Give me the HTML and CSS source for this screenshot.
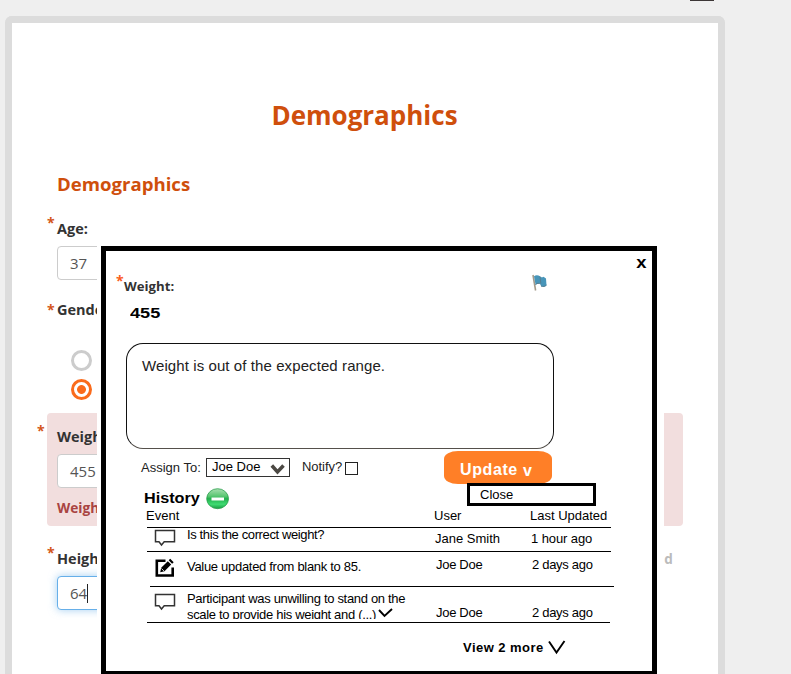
FILE: index.html
```html
<!DOCTYPE html>
<html lang="en">
<head>
<meta charset="utf-8">
<title>Demographics</title>
<link rel="stylesheet" href="styles.css">
</head>
<body>
<div class="top-mark"></div>
<main class="page">
  <h1>Demographics</h1>
  <h2>Demographics</h2>
  <section class="field age">
    <div class="label"><span class="req">*</span>Age:</div>
    <div class="input">37</div>
  </section>
  <section class="field gender">
    <div class="label"><span class="req">*</span>Gender:</div>
    <div class="radio"></div>
    <div class="radio checked"></div>
  </section>
  <section class="field weight">
    <div class="label"><span class="req">*</span>Weight:</div>
    <div class="input">455</div>
    <div class="error">Weight is out of the expected range.</div>
  </section>
  <section class="field height">
    <div class="label"><span class="req">*</span>Height:<span class="hint">d</span></div>
    <div class="input focus">64<i class="caret"></i></div>
  </section>
</main>

<div class="modal">
  <header class="modal-head">
    <div class="title"><span class="req">*</span>Weight:</div>
    <svg class="flag" width="16" height="18" viewBox="0 0 16 18"><path d="M1 1L3.6 16.5" stroke="#a39a8b" stroke-width="1.6"/><path d="M2 2.2C4 .8 6 1 8 2.2C8.500 3.500 10 3.500 11.500 2.700L14 4.500L14.500 11.500C12.500 13 10.500 13.200 9 12L8 9.500C6 9.500 5 9.700 3.600 11Z" fill="#4795b9"/><path d="M8 2.500L8.800 9.500M3.500 10.500C5 9 7 9 8.500 10M9 12C11 13 13 12.500 14.500 11" fill="none" stroke="#567e91" stroke-width="1"/></svg>
    <div class="close-x">x</div>
  </header>
  <div class="value"><span>455</span></div>
  <div class="message"><span>Weight is out of the expected range.</span></div>
  <div class="actions">
    <span class="assign">Assign To:</span>
    <div class="select"><span>Joe Doe</span><svg width="16" height="12" viewBox="0 0 16 12"><path d="M1.800 2.500L7.500 9L13.500 2.500" fill="none" stroke="#4c4944" stroke-width="3.500"/></svg></div>
    <span class="notify">Notify?</span>
    <div class="check"></div>
    <div class="update"><span class="update-text">Update</span><span class="update-v">v</span><div class="menu">Close</div></div>
  </div>
  <div class="history-head">
    <span class="history-title">History</span>
    <svg width="24" height="22" viewBox="0 0 24 22"><defs><linearGradient id="g" x1="0" y1="0" x2="0" y2="1"><stop offset="0" stop-color="#a9dfb0"/><stop offset=".38" stop-color="#58c671"/><stop offset=".5" stop-color="#22b04c"/><stop offset=".78" stop-color="#3fdb72"/><stop offset="1" stop-color="#189a42"/></linearGradient></defs><ellipse cx="11.600" cy="10.700" rx="10.900" ry="10" fill="url(#g)" stroke="#299f4b" stroke-width=".8"/><path d="M5.500 11H18" stroke="#fff" stroke-width="3"/></svg>
  </div>
  <div class="row columns"><span class="c1">Event</span><span class="c2">User</span><span class="c3">Last Updated</span></div>
  <div class="row first">
    <svg class="icon" width="24" height="20" viewBox="0 0 24 20"><path d="M1.500 1.500H20.500V12.800H10.200L7.500 16L5 12.800H1.500Z" fill="#fff" stroke="#333" stroke-width="1.500"/></svg>
    <span class="text">Is this the correct weight?</span><span class="user">Jane Smith</span><span class="date">1 hour ago</span>
  </div>
  <div class="row second">
    <svg class="icon" width="24" height="20" viewBox="0 0 24 20"><path d="M11.500 2.700H2.800V17.500H18.700V9.500" fill="none" stroke="#000" stroke-width="2.600"/><path d="M6.200 14.200L7.200 9.800L13.800 3.200L17.200 6.600L10.500 13.200ZM14.700 2.300L16.200 .8L19.700 4.200L18.100 5.700Z"/><path d="M7.500 10.500L10 13" stroke="#fff" stroke-width=".8"/></svg>
    <span class="text">Value updated from blank to 85.</span><span class="user">Joe Doe</span><span class="date">2 days ago</span>
  </div>
  <div class="row third">
    <svg class="icon" width="24" height="20" viewBox="0 0 24 20"><path d="M1.500 1.500H20.500V12.800H10.200L7.500 16L5 12.800H1.500Z" fill="#fff" stroke="#333" stroke-width="1.500"/></svg>
    <span class="text"><span class="line1">Participant was unwilling to stand on the</span><br><span class="line2">scale to provide his weight and (...)</span><svg class="chev" width="15" height="11" viewBox="0 0 15 11"><path d="M1 2L6.500 8L14 1" fill="none" stroke="#000" stroke-width="1.900"/></svg></span><span class="user">Joe Doe</span><span class="date">2 days ago</span>
  </div>
  <div class="more"><span>View 2 more</span><svg width="18" height="15" viewBox="0 0 18 15"><path d="M1 1.500L8.500 12.500L16.500 1" fill="none" stroke="#000" stroke-width="1.900"/></svg></div>
</div>
</body>
</html>
```
FILE: styles.css
```css
* { box-sizing: border-box; }
html, body { margin: 0; height: 674px; overflow: hidden; }
body { position: relative; background: #efefef; font-family: "Open Sans", sans-serif; }
svg { display: block; flex: none; }
.top-mark { width: 24px; height: 1px; margin-left: 690px; background: #3c3636; }
.page { width: 720px; height: 658px; margin: 15px 0 0 5px; border: 7px solid #dcdcdc; border-bottom: 0; border-radius: 7px 7px 0 0; background: #fff; padding: 74px 0 0 45px; }
h1, h2 { color: #cf4f0c; font-weight: 700; margin: 0; white-space: nowrap; }
h1 { width: 615px; text-align: center; font-size: 26px; line-height: 37px; height: 36px; }
h2 { font-size: 18.600px; line-height: 24px; margin-top: 39px; }
.label { position: relative; font-size: 14.500px; line-height: 20px; font-weight: 700; color: #333; white-space: nowrap; }
.req { position: absolute; left: -10px; top: -6px; font-size: 14px; font-weight: 700; color: #d4551a; }
.age { margin-top: 23px; height: 81px; }
.input { width: 560px; height: 34px; border: 1px solid #ccc; border-radius: 4px; background: #fff; padding-left: 12px; font-size: 15px; line-height: 33px; color: #555; display: flex; align-items: center; }
.age .input { margin-top: 7px; }
.gender { height: 113px; }
.gender .req { top: 0; }
.radio { width: 21px; height: 21px; border: 3px solid #ccc; border-radius: 50%; margin: 30px 0 0 14px; }
.radio.checked { margin-top: 8px; border-color: #fa6b1c; background: radial-gradient(circle, #fa6b1c 4px, #fff 4.800px); }
.weight { width: 636px; height: 113px; margin-left: -10px; padding: 14px 10px 0; background: #f2dede; border-radius: 4px; }
.weight .req { left: -20px; top: -6px; }
.weight .input { margin-top: 7px; }
.error { font-size: 13.700px; line-height: 20px; font-weight: 700; color: #a94442; margin-top: 10px; }
.height { margin-top: 23px; }
.height .input { margin-top: 7px; }
.focus { border-color: #66afe9; box-shadow: 0 0 8px rgba(102, 175, 233, .6); }
.caret { width: 1px; height: 19px; background: #222; }
.hint { margin-left: 555px; color: #bbb; font-size: 13.500px; }

.modal { position: absolute; left: 101px; top: 246px; width: 556px; height: 428px; border: 5px solid #000; border-bottom-width: 3px; background: #fff; box-shadow: -4px 0 #fff, 7px 0 #fff; font: 13px/16px "Liberation Sans", sans-serif; color: #000; white-space: nowrap; }
.modal-head { display: flex; height: 48px; padding: 0 6px 0 18px; }
.title { position: relative; width: 408px; margin-top: 25px; font: 700 13.200px/20px "Open Sans", sans-serif; color: #333; }
.title .req { left: -8px; top: -5px; color: #fa5c1c; }
.flag { margin-top: 23px; }
.close-x { margin: 3px 0 0 89px; font: bold 16px/17px "Liberation Sans", sans-serif; transform: scaleX(1.150); }
.value { height: 44px; padding: 4px 0 0 24px; font: bold 15px/20px "Liberation Sans", sans-serif; }
.value span { display: inline-block; transform: scaleX(1.210); transform-origin: left; }
.message { width: 428px; height: 106px; margin-left: 20px; border: 1px solid #111; border-bottom-color: #55504b; border-radius: 17px; padding: 12px 15px; font-size: 15px; line-height: 20px; letter-spacing: .09px; color: #222; }
.actions { display: flex; height: 38px; padding-left: 35px; color: #222; }
.assign { width: 65px; margin-top: 11px; }
.select { display: flex; justify-content: space-between; width: 84px; height: 19px; margin-top: 9px; border: 1.500px solid #333; padding: 0 3px 0 5px; color: #000; }
.select svg { margin-top: 4px; }
.notify { width: 43px; margin: 10px 0 0 12px; letter-spacing: -.05px; }
.check { width: 13px; height: 13px; margin-top: 13px; border: 1.500px solid #222; }
.update { position: relative; display: flex; width: 108px; height: 33px; margin: 2px 0 0 86px; padding-left: 16px; border-radius: 14px / 8px; background: #ff7f27; color: #fff; font: bold 16px/20px "Liberation Sans", sans-serif; }
.update-text { width: 63px; margin-top: 9px; letter-spacing: .6px; }
.update-v { margin-top: 10px; }
.menu { position: absolute; left: 23px; top: 32px; width: 129px; height: 23px; border: 3px solid #000; background: #fff; color: #000; padding-left: 10px; font: 13px/17px "Liberation Sans", sans-serif; }
.history-head { display: flex; height: 21px; padding-left: 38px; font: bold 15px/18px "Liberation Sans", sans-serif; }
.history-title { width: 62px; height: 18px; padding-top: 2px; transform: scaleX(1.080); transform-origin: left; }
.history-head svg { margin-top: 1px; }
.row { display: grid; grid-template-columns: 40px 248px 97px 1fr; width: 464px; margin-left: 41px; border-bottom: 1.500px solid #000; }
.columns { height: 20px; grid-template-columns: 287px 96px 1fr; }
.columns .c1 { margin-left: -1px; }
.first { height: 24px; }
.icon { margin-left: 7px; }
.first .icon { margin-top: 1px; }
.first .text { margin-top: -1px; letter-spacing: -.38px; }
.first .user, .first .date { margin-top: 3px; }
.first .date { margin-left: -1px; }
.date { letter-spacing: -.3px; }
.first .date { letter-spacing: -.1px; }
.second { height: 35px; margin-left: 44px; grid-template-columns: 37px 249px 96px 1fr; }
.second .icon { margin: 6px 0 0 4px; }
.second .text { margin-top: 7px; letter-spacing: -.3px; }
.second .user, .second .date { margin-top: 5px; }
.third { height: 36px; width: 463px; grid-template-columns: 40px 249px 96px 1fr; }
.third .icon { margin-top: 6px; }
.third .text { position: relative; height: 28px; margin-top: 4px; overflow: hidden; letter-spacing: -.32px; }
.chev { position: absolute; left: 191px; top: 17px; }
.third .user, .third .date { margin-top: 18px; }
.second .user, .third .user { letter-spacing: -.3px; }
.more { display: flex; margin: 17px 0 0 357px; font-weight: bold; }
.more span { width: 85px; letter-spacing: .45px; }
```
